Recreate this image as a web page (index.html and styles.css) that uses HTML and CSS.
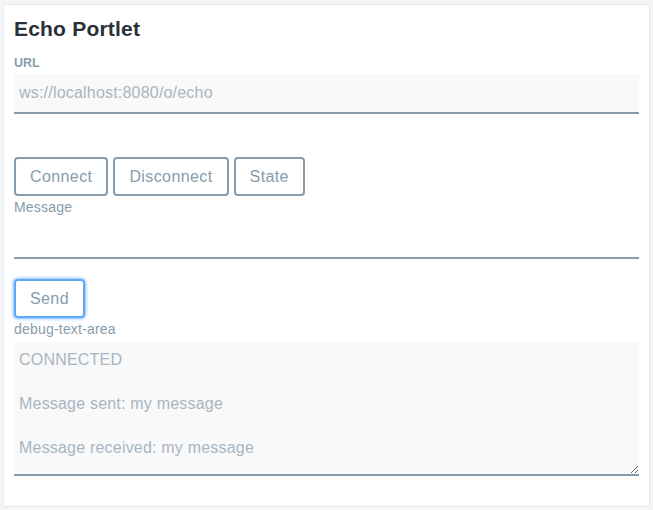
FILE: index.html
```html
<!DOCTYPE html>
<html>
<head>
<meta charset="utf-8">
<link rel="stylesheet" href="styles.css">
</head>
<body>
<div class="card">
  <h2 class="title">Echo Portlet</h2>
  <label class="label" for="url">URL</label>
  <input id="url" class="field field-filled" type="text" value="ws://localhost:8080/o/echo">
  <div class="btn-row">
    <button class="btn">Connect</button>
    <button class="btn">Disconnect</button>
    <button class="btn">State</button>
  </div>
  <label class="label label-tight" for="msg">Message</label>
  <input id="msg" class="field" type="text">
  <div class="btn-row btn-row-send">
    <button class="btn btn-focus">Send</button>
  </div>
  <label class="label label-tight label-area" for="dbg">debug-text-area</label>
  <textarea id="dbg" class="field area" readonly>CONNECTED

Message sent: my message

Message received: my message</textarea>
</div>
</body>
</html>
```
FILE: styles.css
```css
html, body {
  margin: 0;
  padding: 0;
  background: #f3f5f7;
}
body {
  padding: 4px 0 0 3px;
  font-family: "Liberation Sans", Arial, sans-serif;
}
.card {
  box-sizing: border-box;
  width: 647px;
  height: 503px;
  background: #fff;
  border: 1px solid #e1ebf0;
  border-radius: 2px;
  padding: 10px 10px;
  display: flex;
  flex-direction: column;
  align-items: stretch;
}
.title {
  margin: 0;
  font-size: 21px;
  line-height: 28px;
  font-weight: 700;
  color: #2b3038;
  letter-spacing: 0.2px;
  margin-bottom: 12px;
}
.label {
  display: block;
  font-size: 12.5px;
  line-height: 16px;
  font-weight: 700;
  color: #869cad;
  margin-bottom: 3px;
}
.label-tight {
  font-weight: 400;
  font-size: 14px;
  letter-spacing: 0.2px;
  margin-top: 3px;
  margin-bottom: 4px;
}
.label-area {
  margin-bottom: 5px;
}
.field {
  box-sizing: border-box;
  width: 100%;
  height: 40px;
  margin: 0;
  border: none;
  border-bottom: 2px solid #869cad;
  background: transparent;
  font-family: "Liberation Sans", Arial, sans-serif;
  font-size: 16px;
  letter-spacing: 0.2px;
  color: #a7b5c1;
  padding: 0 5px;
  outline: none;
}
.field-filled {
  background: #f9f9f9;
}
.btn-row {
  display: flex;
  gap: 5px;
  margin-top: 43px;
}
.btn-row-send {
  margin-top: 20px;
}
.btn {
  box-sizing: border-box;
  height: 39px;
  padding: 0 14px;
  background: #fff;
  border: 2px solid #869cad;
  border-radius: 4px;
  font-family: "Liberation Sans", Arial, sans-serif;
  font-size: 16px;
  letter-spacing: 0.4px;
  color: #869cad;
}
.btn-focus {
  border-color: #5fa8f5;
  box-shadow: 0 0 3px 1px rgba(80, 160, 255, 0.7);
}
.area {
  height: 134px;
  background: #f9f9f9;
  padding: 7px 5px;
  line-height: 22px;
  resize: vertical;
}
```
